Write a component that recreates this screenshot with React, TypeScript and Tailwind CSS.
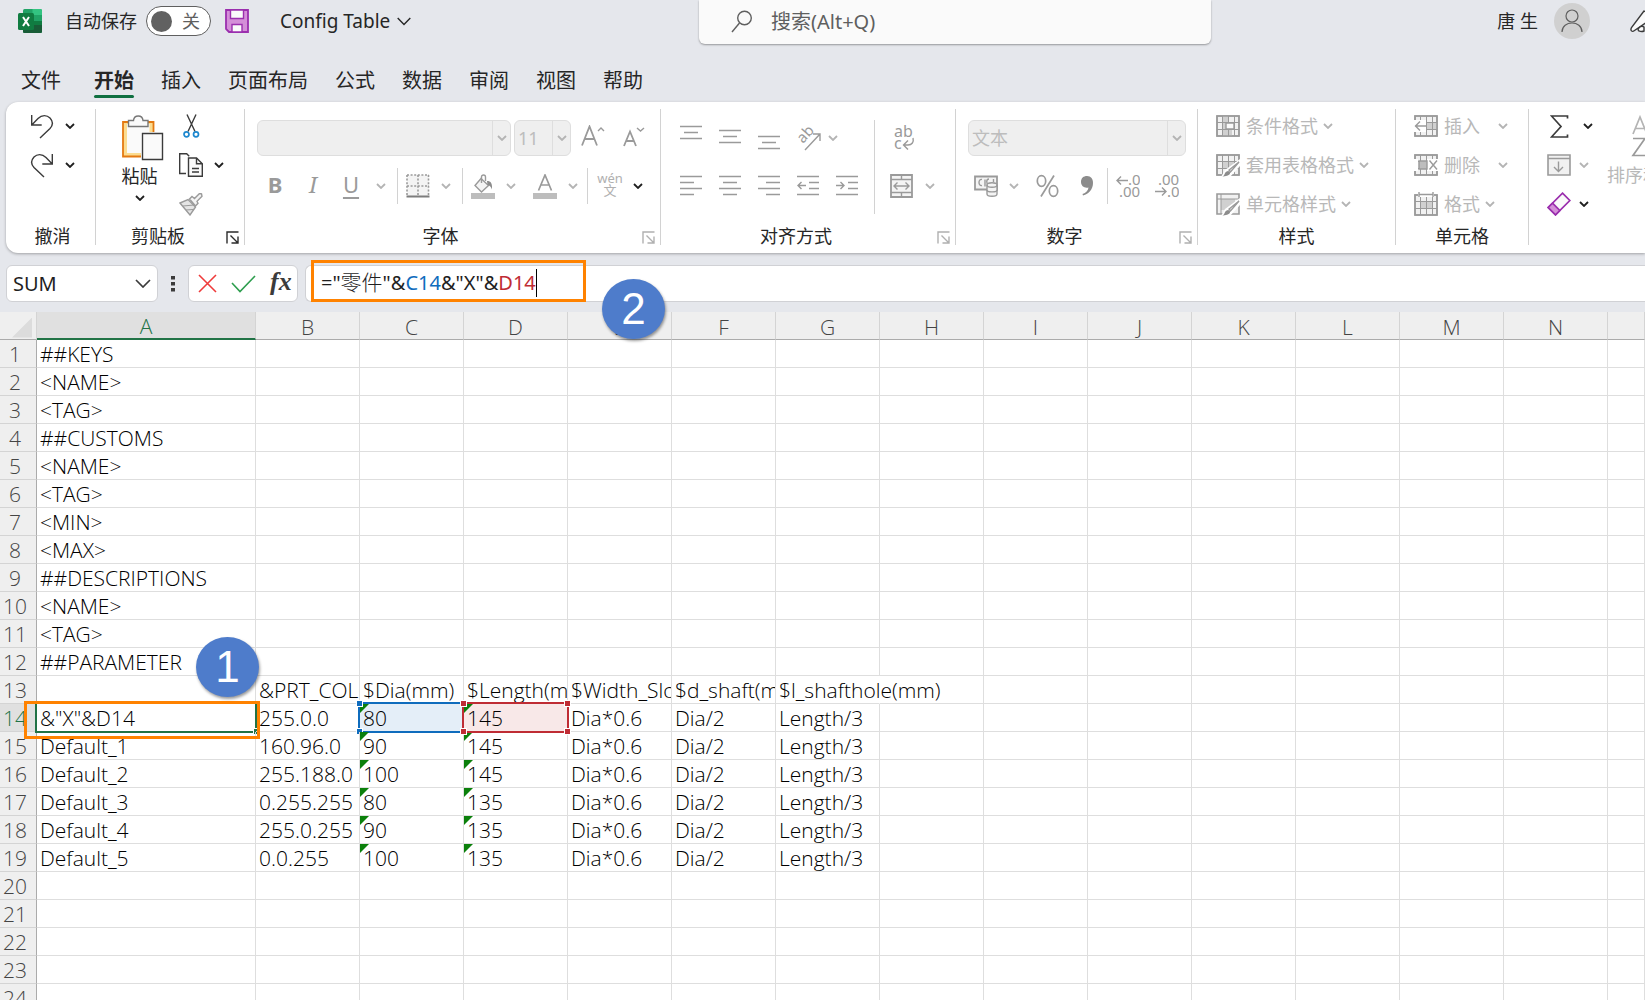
import type { ReactNode } from 'react';
import clsx from 'clsx';

const UI_FONT = "font-['Noto_Sans','Noto_Sans_CJK_SC',sans-serif]";
const CELL_FONT = "font-['Open_Sans','Noto_Sans_CJK_SC',sans-serif]";

/* ---------- 图标 ---------- */

interface IconProps {
  w: number;
  h: number;
  className?: string;
  children: ReactNode;
}

function Icon({ w, h, className = 'text-[#9a9a9a]', children }: IconProps) {
  return (
    <svg
      width={w}
      height={h}
      viewBox={`0 0 ${w} ${h}`}
      className={clsx('shrink-0', className)}
      fill="none"
      stroke="currentColor"
      strokeWidth={1.4}
      aria-hidden="true"
    >
      {children}
    </svg>
  );
}

function Chevron({ dark = false }: { dark?: boolean }) {
  return (
    <Icon w={10} h={6} className={dark ? 'text-[#1f1f1f]' : 'text-[#b4b4b4]'}>
      <path d="M1 1l4 4 4-4" strokeWidth={1.8} />
    </Icon>
  );
}

function ExcelLogo() {
  return (
    <Icon w={24} h={24}>
      <g stroke="none">
        <rect x="5" y="0" width="19" height="24" rx="1.5" fill="#21a366" />
        <path d="M14.500 0H22.500a1.500 1.500 0 0 1 1.500 1.500V6h-9.500z" fill="#33c481" />
        <path d="M5 6h9.500v6H5z" fill="#107c41" />
        <path d="M5 12h19v6H5z" fill="#107c41" />
        <path d="M5 16h19v6.500a1.500 1.500 0 0 1-1.500 1.500h-16A1.500 1.500 0 0 1 5 22.500z" fill="#185c37" />
        <rect x="0" y="4" width="16" height="17" rx="1.500" fill="#107c41" />
      </g>
      <path d="M5 8l6 9M11 8l-6 9" stroke="#fff" strokeWidth={2} />
    </Icon>
  );
}

function SaveIcon() {
  return (
    <Icon w={24} h={24} className="text-[#9b2fae]">
      <path d="M1 1h22v22H4l-3-3z" fill="#d48fd8" strokeWidth={1.8} />
      <path d="M5.500 1h13v8.500h-13z" fill="#fafafa" />
      <path d="M7 23v-7.500h10V23z" fill="#fafafa" />
    </Icon>
  );
}

function UndoIcon({ flip = false }: { flip?: boolean }) {
  return (
    <Icon w={24} h={25} className={clsx('text-[#3b3b3b]', flip && '-scale-x-100')}>
      <path d="M1.700 1v10h10M2 10.700L8 4.500C12 .5 17 1 20 4c3 3.300 3 7.300 0 10.500L10 24" />
    </Icon>
  );
}

function PasteIcon() {
  return (
    <Icon w={42} h={46}>
      <path d="M1 7h30.500v34.500H1z" fill="#fbdc90" stroke="#e47911" strokeWidth={1.8} />
      <path d="M5 9h22.500v29H5z" fill="#fafafa" stroke="none" />
      <path d="M6.500 11.500v-6h5c.5-6 9-6 9.500 0h5v6z" fill="#fafafa" stroke="#777" />
      <path d="M19 17h23v29H19z" fill="#fff" stroke="none" />
      <path d="M20.500 18.500h20v26h-20z" fill="#fafafa" stroke="#3b3b3b" />
    </Icon>
  );
}

function CutIcon() {
  return (
    <Icon w={17} h={24} className="text-[#3b3b3b]">
      <path d="M4 .5l8 17M13 .5l-8 17" />
      <circle cx="3.500" cy="20.300" r="2.500" stroke="#1e88cf" strokeWidth={1.700} />
      <circle cx="13" cy="20.300" r="2.500" stroke="#1e88cf" strokeWidth={1.700} />
    </Icon>
  );
}

function CopyIcon() {
  return (
    <Icon w={24} h={24} className="text-[#3b3b3b]">
      <path d="M7 20.500H.7V.7h7l2.500 2.500" />
      <path d="M9.500 5h8l5.800 5.800v12.500H9.500z" fill="#fafafa" />
      <path d="M17.500 5v5.800h5.800M13 15.500h7M13 19h7" />
    </Icon>
  );
}

function PainterIcon() {
  return (
    <Icon w={24} h={23}>
      <path d="M1 10l8-3.500 7.500 7.500-5.500 8z" fill="#e4e4e4" />
      <path d="M10.500 6l2.500-2.500 2.500 2 5-5 2 .3.500 2.500-5 5 1 2-2.500 2.700z" fill="#f4f4f4" />
      <path d="M4 13l11-1M7 17l7-.500" strokeWidth={1} />
    </Icon>
  );
}

function LauncherIcon({ dark = false }: { dark?: boolean }) {
  return (
    <Icon w={13} h={13} className={dark ? 'text-[#2b2b2b]' : 'text-[#b0b0b0]'}>
      <path d="M1 12.500V1h11.500M4.500 4.500l7 7M12 5.500V12H5.500" />
    </Icon>
  );
}

function BordersIcon() {
  return (
    <Icon w={24} h={24}>
      <path d="M1 1h22v21H1z" fill="#f4f4f4" stroke="none" />
      <path d="M1 1h22M1 12h22M1 1v20M12 1v20M22.500 1v20" strokeDasharray="2 1.600" strokeWidth={1.600} />
      <path d="M.5 22.500h23" strokeWidth={2} stroke="#7d7d7d" />
    </Icon>
  );
}

function FillColorIcon() {
  return (
    <Icon w={24} h={25}>
      <path d="M10 4.500l7.500 7-7 6.500L4 11.500z" fill="#f4f4f4" />
      <path d="M10.500 9V3a2 2 0 0 1 4 0v4" />
      <path d="M16 7c4 0 5.500 2.500 5 8.500-1-2.500-2-4-4.500-4.500z" fill="#8c8c8c" stroke="none" />
      <path d="M0 19h24v6H0z" fill="#bdbdbd" stroke="none" />
    </Icon>
  );
}

function FontColorIcon() {
  return (
    <Icon w={24} h={25}>
      <path d="M5.500 16.500L12 1l6.500 15.500M8 11h8" strokeWidth={1.700} />
      <path d="M0 19h24v6H0z" fill="#bdbdbd" stroke="none" />
    </Icon>
  );
}

function GrowFontIcon({ shrink = false }: { shrink?: boolean }) {
  return (
    <Icon w={24} h={22}>
      {shrink ? (
        <>
          <path d="M3 21L9 6.500 15 21M5 16h8" strokeWidth={1.800} />
          <path d="M16 3l3.500 3L23 3" />
        </>
      ) : (
        <>
          <path d="M1 20.500L8.500 1.500 16 20.500M4 14h9" strokeWidth={1.800} />
          <path d="M17 6l3-3 3 3" />
        </>
      )}
    </Icon>
  );
}

/* 三条或四条横线组成的对齐图标 */
function LinesIcon({ lines }: { lines: [number, number, number][] }) {
  return (
    <Icon w={22} h={26}>
      {lines.map(([y, x1, x2]) => (
        <path key={y} d={`M${x1} ${y}.5H${x2}`} strokeWidth={1.600} />
      ))}
    </Icon>
  );
}

function IndentIcon({ out = false }: { out?: boolean }) {
  return (
    <Icon w={22} h={26}>
      <path d="M0 3.500h22M12 9.500h10M12 15.500h10M0 21.500h22" strokeWidth={1.600} />
      <path d={out ? 'M9 12.500H1M4.500 9L1 12.500 4.500 16' : 'M0 12.500h8M4.500 9L8 12.500 4.500 16'} />
    </Icon>
  );
}

function OrientationIcon() {
  return (
    <Icon w={25} h={25}>
      <text x="6" y="18" transform="rotate(-48 6 18)" fontSize="15" fill="currentColor" stroke="none">
        ab
      </text>
      <path d="M8 24L23 8M16 8h7v7" />
    </Icon>
  );
}

function WrapIcon() {
  return (
    <Icon w={22} h={26}>
      <text x="1" y="12" fontSize="16" fill="currentColor" stroke="none">ab</text>
      <text x="1" y="24" fontSize="16" fill="currentColor" stroke="none">c</text>
      <path d="M20 13c1 4-1 7-5 7h-4M15 15.500L10.500 20l4.500 4.500" />
    </Icon>
  );
}

function MergeIcon() {
  return (
    <Icon w={23} h={24}>
      <path d="M1 1h21v22H1z" fill="#f4f4f4" strokeWidth={1.800} />
      <path d="M1 5.500h21M1 18.500h21M11.500 1v4.500M11.500 18.500V23M4 12h15M7.500 8.500L4 12l3.500 3.500M15.500 8.500L19 12l-3.500 3.500" />
    </Icon>
  );
}

function AccountingIcon() {
  return (
    <Icon w={24} h={22}>
      <path d="M1 1.500h22v13H1z" fill="#f4f4f4" strokeWidth={1.800} />
      <path d="M8 4.500c-4-1-4 7 0 6M11 4.500v7M15 4c-3 0-3 5 0 7M19.500 4v3" />
      <path d="M13 10c0-3 10-3 10 0v9c0 3-10 3-10 0z" fill="#f4f4f4" />
      <path d="M13 10c0 3 10 3 10 0M13 15c0 2.500 10 2.500 10 0" />
    </Icon>
  );
}

function PercentIcon() {
  return (
    <Icon w={23} h={24}>
      <ellipse cx="5.500" cy="7" rx="4.200" ry="5.300" strokeWidth={1.700} />
      <ellipse cx="17.500" cy="17" rx="4.200" ry="5.300" strokeWidth={1.700} />
      <path d="M18 1.500L5 22.500" strokeWidth={1.700} />
    </Icon>
  );
}

function CommaIcon() {
  return (
    <Icon w={12} h={20}>
      <path d="M6 0c4 0 6 3 6 7 0 6-4 11-10 12.500l-.5-1.500c3.500-1 5.500-3.500 6-6.500-4 1-7.500-1.500-7.500-5.500S2.500 0 6 0z" fill="#8c8c8c" stroke="none" />
    </Icon>
  );
}

function DecimalIcon({ decrease = false }: { decrease?: boolean }) {
  return (
    <Icon w={24} h={26}>
      <g fill="currentColor" stroke="none" fontSize="15">
        <text x={decrease ? 3 : 12} y="12">{decrease ? '.00' : '.0'}</text>
        <text x={decrease ? 12 : 3} y="24">{decrease ? '.0' : '.00'}</text>
      </g>
      <path d={decrease ? 'M0 18.500h11M7 14.500l4 4-4 4' : 'M12 7.500H1M5 3.500l-4 4 4 4'} />
    </Icon>
  );
}

function TableBase({ shade }: { shade?: string }) {
  return (
    <>
      <path d="M1 1h22v20H1z" fill="#f1f1f1" />
      {shade && <path d={shade} fill="#d0d0d0" stroke="none" />}
      <path d="M1 7.500h22M1 14.500h22M6.500 1v20M12.500 1v20M18.500 1v20" strokeWidth={1} />
      <path d="M1 1h22v20H1z" strokeWidth={1.600} />
    </>
  );
}

function BrushOverlay() {
  return (
    <>
      <path d="M24 5L9 16l-4 7h9l10-11z" fill="#fff" stroke="none" />
      <path d="M23 8L13 16l1.500 2z" fill="#e8e8e8" />
      <path d="M6 22.500c3 0 2-5 6-5.500 4 1 2.500 5.500-6 5.500z" fill="#8c8c8c" stroke="none" />
    </>
  );
}

const CondFormatIcon = () => (
  <Icon w={24} h={22}>
    <TableBase shade="M7 1h6v6H7zM7 8h3v6H7zM7 15h9v6H7z" />
    <path d="M10 8h8v6h-8z" fill="#fafafa" />
  </Icon>
);

const TableFormatIcon = () => (
  <Icon w={24} h={23}>
    <TableBase shade="M7 8h11v6H7z" />
    <BrushOverlay />
  </Icon>
);

const CellStyleIcon = () => (
  <Icon w={24} h={23}>
    <path d="M1 1h22v20H1z" fill="#f1f1f1" strokeWidth={1.600} />
    <path d="M5 6h14v11H5z" fill="#d0d0d0" stroke="none" />
    <path d="M1 6h22M5 1v20" strokeWidth={1} />
    <BrushOverlay />
  </Icon>
);

const InsertCellIcon = () => (
  <Icon w={24} h={22}>
    <TableBase shade="M13 8h10v6H13z" />
    <path d="M0 5h12v12H0z" fill="#fff" stroke="none" />
    <path d="M12 11H1M6 6.500L1.500 11 6 15.500" />
  </Icon>
);

const DeleteCellIcon = () => (
  <Icon w={24} h={22}>
    <TableBase />
    <path d="M0 5h4v12H0zM13 5h11v12H13z" fill="#fff" stroke="none" />
    <path d="M5 7h8v8H5z" fill="#bdbdbd" />
    <path d="M15.500 6.500l7.500 9M23 6.500l-7.500 9" />
  </Icon>
);

const FormatCellIcon = () => (
  <Icon w={24} h={24}>
    <g transform="translate(0 2)">
      <TableBase shade="M6 8h12v6H6z" />
    </g>
    <path d="M4 0h16v5H4z" fill="#fff" stroke="none" />
    <path d="M5 0v5M19 0v5M5 2.500h14" />
  </Icon>
);

function SigmaIcon() {
  return (
    <Icon w={19} h={23} className="text-[#3b3b3b]">
      <path d="M17.500 3.500V1H1.500l9.500 10.500L1.500 22h16v-2.500" strokeWidth={1.700} />
    </Icon>
  );
}

function FillDownIcon() {
  return (
    <Icon w={24} h={22}>
      <path d="M1 1h22v20H1z" fill="#f1f1f1" strokeWidth={1.600} />
      <path d="M1 4.500h22M11.500 7.500v10M7 13l4.500 4.500L16 13" />
    </Icon>
  );
}

function EraserIcon() {
  return (
    <Icon w={24} h={24} className="text-[#9b2fae]">
      <path d="M15.500 1.200l7.300 7.300L8.500 22.800 1.200 15.500z" fill="#fafafa" strokeWidth={1.700} />
      <path d="M5.500 11.200l7.300 7.300-4.300 4.300-7.300-7.300z" fill="#d48fd8" strokeWidth={1.700} />
    </Icon>
  );
}

function SortIcon() {
  return (
    <Icon w={42} h={42}>
      <path d="M2 19L9 2l7 17M4.500 13.500h9" strokeWidth={1.700} stroke="#b4b4b4" />
      <path d="M2 23.500h12L2 40.500h13" strokeWidth={1.700} />
      <path d="M22 3h19L33 14v14l-4-3V14z" />
    </Icon>
  );
}

/* ---------- 功能区 ---------- */

interface ToolProps {
  label: string;
  className?: string;
  children: ReactNode;
}

function Tool({ label, className, children }: ToolProps) {
  return (
    <button type="button" title={label} aria-label={label} className={clsx('flex h-9 shrink-0 items-center justify-center', className)}>
      {children}
    </button>
  );
}

function Sep({ className }: { className?: string }) {
  return <span className={clsx('h-9 w-px shrink-0 bg-[#d2d2d2]', className)} />;
}

interface GroupProps {
  title: string;
  width: string;
  launcher?: 'dark' | 'light';
  children: ReactNode;
}

function Group({ title, width, launcher, children }: GroupProps) {
  return (
    <section className={clsx('flex h-[136px] shrink-0 flex-col border-r border-[#d2d2d2]', width)}>
      <div className="min-h-0 flex-1">{children}</div>
      <div className="flex h-[18px] items-start">
        <h2 className="flex-1 text-center text-lg leading-[18px] text-[#262626]">{title}</h2>
        {launcher && (
          <button type="button" aria-label={`${title}设置`} className="flex w-6 justify-center pt-1">
            <LauncherIcon dark={launcher === 'dark'} />
          </button>
        )}
      </div>
    </section>
  );
}

interface ComboProps {
  label: string;
  value: string;
  width: string;
}

function Combo({ label, value, width }: ComboProps) {
  return (
    <div className={clsx('flex h-9 shrink-0 overflow-hidden rounded-md border border-[#dedede] bg-[#efefef]', width)}>
      <select
        aria-label={label}
        disabled
        defaultValue={value}
        className="min-w-0 flex-1 appearance-none bg-transparent pl-[3px] text-lg text-[#bdbdbd] opacity-100"
      >
        <option value={value}>{value}</option>
      </select>
      <span className="flex w-[18px] items-center justify-center border-l border-[#dedede]">
        <Chevron />
      </span>
    </div>
  );
}

interface ListToolProps {
  icon: ReactNode;
  text: string;
  wide?: boolean;
}

function ListTool({ icon, text, wide = false }: ListToolProps) {
  return (
    <button type="button" className="flex h-[34px] items-center whitespace-nowrap text-lg text-[#b8b8b8]">
      {icon}
      <span className={clsx('ml-1.5', wide && 'w-[49px] text-left')}>{text}</span>
      <span className="ml-[5px]">
        <Chevron />
      </span>
    </button>
  );
}

function Ribbon() {
  return (
    <div className="ml-1.5 flex h-[151px] shrink-0 overflow-hidden rounded-l-xl bg-white pt-[7px] shadow-[0_1px_3px_rgba(0,0,0,0.3)]">
      <Group title="撤消" width="w-[90px] pl-1">
        <div className="flex flex-col gap-[5px] pl-5">
          {[false, true].map((flip) => (
            <div key={String(flip)} className="flex h-[34px] items-center gap-[11px]">
              <button type="button" aria-label={flip ? '恢复' : '撤消'}>
                <UndoIcon flip={flip} />
              </button>
              <Chevron dark />
            </div>
          ))}
        </div>
      </Group>

      <Group title="剪贴板" width="w-[149px]" launcher="dark">
        <div className="flex">
          <button type="button" className="flex w-[83px] flex-col items-center pt-1.5 pl-1 text-lg leading-6 text-[#262626]">
            <span className="pl-1.5"><PasteIcon /></span>
            <span className="mt-[3px]">粘贴</span>
            <span className="flex h-5 items-center">
              <Chevron dark />
            </span>
          </button>
          <div className="flex flex-col gap-[5px]">
            <button type="button" aria-label="剪切" className="flex h-[34px] w-6 items-center justify-center">
              <CutIcon />
            </button>
            <button type="button" aria-label="复制" className="flex h-[34px] items-center gap-[11px]">
              <CopyIcon />
              <Chevron dark />
            </button>
            <button type="button" aria-label="格式刷" className="flex h-[34px] w-6 items-center">
              <PainterIcon />
            </button>
          </div>
        </div>
      </Group>

      <Group title="字体" width="w-[416px]" launcher="light">
        <div className="flex flex-col gap-3 pt-[11px] pl-3">
          <div className="flex items-center">
            <Combo label="字体" value="" width="w-[254px]" />
            <Combo label="字号" value="11" width="w-[57px] ml-[3px]" />
            <Tool label="增大字号" className="ml-1.5 w-8 pb-1"><GrowFontIcon /></Tool>
            <Tool label="减小字号" className="ml-2 w-8 pb-1"><GrowFontIcon shrink /></Tool>
          </div>
          <div className="flex items-center text-[22px] text-[#9a9a9a]">
            <Tool label="加粗" className="w-9 pb-1 font-bold">B</Tool>
            <Tool label="倾斜" className="w-10 pb-1 font-['Noto_Serif','DejaVu_Serif','Liberation_Serif',serif] italic">I</Tool>
            <Tool label="下划线" className="w-9 pb-1 underline underline-offset-4">U</Tool>
            <Tool label="下划线样式" className="w-6"><Chevron /></Tool>
            <Sep className="ml-1" />
            <Tool label="边框" className="ml-1 w-8"><BordersIcon /></Tool>
            <Tool label="边框样式" className="w-6"><Chevron /></Tool>
            <Sep className="ml-1" />
            <Tool label="填充颜色" className="ml-1 w-8"><FillColorIcon /></Tool>
            <Tool label="更多填充颜色" className="w-6"><Chevron /></Tool>
            <Tool label="字体颜色" className="ml-1 w-9"><FontColorIcon /></Tool>
            <Tool label="更多字体颜色" className="w-5"><Chevron /></Tool>
            <Sep className="ml-1" />
            <Tool label="拼音指南" className="w-11 flex-col pb-1 text-[13px] leading-3 text-[#b0b0b0]">
              <span>wén</span>
              <span>文</span>
            </Tool>
            <Tool label="更多拼音选项" className="w-3"><Chevron dark /></Tool>
          </div>
        </div>
      </Group>

      <Group title="对齐方式" width="w-[295px]" launcher="light">
        <div className="flex pt-[11px] pl-[19px]">
          <div className="flex flex-col gap-3">
            <div className="flex h-9 items-center gap-[17px]">
              <LinesIcon lines={[[1, 0, 22], [7, 4, 18], [13, 0, 22]]} />
              <LinesIcon lines={[[5, 0, 22], [11, 4, 18], [17, 0, 22]]} />
              <LinesIcon lines={[[11, 0, 22], [17, 4, 18], [23, 0, 22]]} />
              <div className="flex items-center gap-1.5">
                <OrientationIcon />
                <Chevron />
              </div>
            </div>
            <div className="flex h-9 items-center gap-[17px]">
              <LinesIcon lines={[[3, 0, 22], [9, 0, 14], [15, 0, 22], [21, 0, 14]]} />
              <LinesIcon lines={[[3, 0, 22], [9, 4, 18], [15, 0, 22], [21, 4, 18]]} />
              <LinesIcon lines={[[3, 0, 22], [9, 8, 22], [15, 0, 22], [21, 8, 22]]} />
              <IndentIcon out />
              <IndentIcon />
            </div>
          </div>
          <span className="ml-4 h-[94px] w-px bg-[#d2d2d2]" />
          <div className="ml-[15px] flex flex-col gap-3">
            <Tool label="自动换行" className="w-7"><WrapIcon /></Tool>
            <Tool label="合并后居中" className="gap-3">
              <MergeIcon />
              <Chevron />
            </Tool>
          </div>
        </div>
      </Group>

      <Group title="数字" width="w-[242px]" launcher="light">
        <div className="flex flex-col gap-3 pt-[11px] pl-3">
          <Combo label="数字格式" value="文本" width="w-[218px]" />
          <div className="flex items-center pl-1.5">
            <Tool label="会计数字格式" className="gap-[11px]">
              <AccountingIcon />
              <Chevron />
            </Tool>
            <Tool label="百分比样式" className="ml-[17px]"><PercentIcon /></Tool>
            <Tool label="千位分隔样式" className="ml-[22px]"><CommaIcon /></Tool>
            <Sep className="ml-3.5" />
            <Tool label="增加小数位数" className="ml-2"><DecimalIcon /></Tool>
            <Tool label="减少小数位数" className="ml-[15px]"><DecimalIcon decrease /></Tool>
          </div>
        </div>
      </Group>

      <Group title="样式" width="w-[198px]">
        <div className="flex flex-col gap-[5px] pl-[18px]">
          <ListTool icon={<CondFormatIcon />} text="条件格式" />
          <ListTool icon={<TableFormatIcon />} text="套用表格格式" />
          <ListTool icon={<CellStyleIcon />} text="单元格样式" />
        </div>
      </Group>

      <Group title="单元格" width="w-[133px]">
        <div className="flex flex-col gap-[5px] pl-[18px]">
          <ListTool icon={<InsertCellIcon />} text="插入" wide />
          <ListTool icon={<DeleteCellIcon />} text="删除" wide />
          <ListTool icon={<FormatCellIcon />} text="格式" />
        </div>
      </Group>

      <div className="flex min-w-0 flex-1 overflow-hidden pl-[18px]">
        <div className="flex shrink-0 flex-col gap-[5px]">
          <button type="button" aria-label="自动求和" className="flex h-[34px] items-center gap-3.5 pl-[3px]">
            <SigmaIcon />
            <Chevron dark />
          </button>
          <button type="button" aria-label="填充" className="flex h-[34px] items-center gap-2">
            <FillDownIcon />
            <Chevron />
          </button>
          <button type="button" aria-label="清除" className="flex h-[34px] items-center gap-2">
            <EraserIcon />
            <Chevron dark />
          </button>
        </div>
        <button type="button" className="ml-3.5 flex h-20 shrink-0 flex-col items-center pt-1.5 text-lg leading-6 text-[#b8b8b8]">
          <SortIcon />
          <span className="mt-1.5">排序和筛选</span>
        </button>
      </div>
    </div>
  );
}

/* ---------- 标题栏与选项卡 ---------- */

function TitleBar() {
  return (
    <header className="flex h-[58px] shrink-0 items-start text-lg text-[#262626]">
      <div className="flex h-[42px] w-[699px] shrink-0 items-center pl-[18px]">
        <ExcelLogo />
        <span className="ml-[23px]">自动保存</span>
        <button
          type="button"
          role="switch"
          aria-checked="false"
          aria-label="自动保存"
          className="ml-[9px] flex h-[30px] w-[65px] items-center justify-between rounded-full border border-[#5f5f5f] bg-white pr-2.5 pl-1 text-[#5f5f5f]"
        >
          <span className="size-[21px] rounded-full bg-[#616161]" />
          <span>关</span>
        </button>
        <button type="button" aria-label="保存" className="ml-3.5"><SaveIcon /></button>
        <button type="button" className="ml-[31px] flex items-center gap-[7px] pt-0.5 text-[19px]">
          Config Table
          <Icon w={14} h={9} className="text-[#262626]">
            <path d="M.7 1L7 7.500 13.300 1" />
          </Icon>
        </button>
      </div>
      <label className="flex h-[44px] min-w-0 flex-1 items-center rounded-b-md bg-[#fafafa] pb-0.5 pl-8 shadow-[0_1px_2px_rgba(0,0,0,0.35)]">
        <Icon w={22} h={23} className="text-[#5f5f5f]">
          <circle cx="13.500" cy="8" r="6.800" />
          <path d="M8.500 13L1 22" />
        </Icon>
        <input
          type="search"
          aria-label="搜索"
          placeholder="搜索(Alt+Q)"
          className="ml-[18px] h-10 min-w-0 flex-1 bg-transparent text-xl outline-none placeholder:text-[#5f5f5f]"
        />
      </label>
      <div className="flex h-[42px] w-[434px] shrink-0 items-center justify-end overflow-hidden">
        <span>唐 生</span>
        <span className="ml-4 flex size-9 items-center justify-center rounded-full bg-[#d0d0d0]">
          <Icon w={22} h={24} className="text-[#5f5f5f]">
            <circle cx="11" cy="7" r="6" strokeWidth={1.200} />
            <path d="M1 23c0-12 20-12 20 0" strokeWidth={1.200} />
          </Icon>
        </span>
        <span className="ml-10 flex w-[15px] overflow-hidden">
          <Icon w={30} h={24} className="text-[#3b3b3b]">
            <path d="M14 2L1.500 18.500C0 21.500 2 23.500 4.500 21.500L17 13l7-7z" fill="#fafafa" />
            <path d="M8 20.500c1-3 4-4 6-2.500v4c-2 1-6 .5-6-1.500z" fill="#fafafa" />
          </Icon>
        </span>
      </div>
    </header>
  );
}

const TABS = ['文件', '开始', '插入', '页面布局', '公式', '数据', '审阅', '视图', '帮助'];

function Tabs() {
  return (
    <nav className="flex h-11 shrink-0 gap-[27px] pl-[21px] text-xl text-[#262626]">
      {TABS.map((tab) => (
        <button
          key={tab}
          type="button"
          className={clsx(
            'flex h-10 flex-col justify-end leading-7',
            tab === '文件' && 'mr-1.5',
            tab === '开始' && 'font-bold',
          )}
        >
          {tab}
          <span className={clsx('h-[3px] w-full rounded-full', tab === '开始' && 'bg-[#107041]')} />
        </button>
      ))}
    </nav>
  );
}

/* ---------- 编辑栏 ---------- */

function FormulaBar() {
  return (
    <div className="flex h-[59px] shrink-0 items-start pt-3 pl-1.5">
      <div className="flex h-[37px] w-[152px] shrink-0 items-center rounded-md border border-[#d0d1d5] bg-white pr-1.5">
        <input aria-label="名称框" defaultValue="SUM" className="min-w-0 flex-1 bg-transparent pl-1.5 text-xl text-[#1f1f1f] outline-none" />
        <button type="button" aria-label="名称列表">
          <Icon w={16} h={9} className="text-[#3b3b3b]">
            <path d="M1 1l7 7 7-7" strokeWidth={1.700} />
          </Icon>
        </button>
      </div>
      <span className="flex h-[37px] w-[30px] shrink-0 items-center justify-center">
        <Icon w={4} h={16} className="text-[#3b3b3b]">
          <path d="M0 0h4v3.500H0zM0 6h4v3.500H0zM0 12h4v3.500H0z" fill="currentColor" stroke="none" />
        </Icon>
      </span>
      <div className="flex h-[37px] w-[110px] shrink-0 items-center rounded-md border border-[#d0d1d5] bg-white pl-[9px]">
        <button type="button" aria-label="取消">
          <Icon w={19} h={19} className="text-[#ef3b3b]">
            <path d="M1 1l17 17M18 1L1 18" strokeWidth={1.600} />
          </Icon>
        </button>
        <button type="button" aria-label="输入" className="ml-3.5">
          <Icon w={25} h={18} className="text-[#2e9e4f]">
            <path d="M1 8l8 8.500L24 1" strokeWidth={1.600} />
          </Icon>
        </button>
        <button type="button" aria-label="插入函数" className="ml-3.5 pb-1 font-['Liberation_Serif',serif] text-[26px] leading-8 font-bold text-[#3b3b3b] italic">
          fx
        </button>
      </div>
      <div className="relative ml-[7px] h-[37px] min-w-0 flex-1 rounded-l-md border border-r-0 border-[#d0d1d5] bg-white">
        <div
          role="textbox"
          aria-label="编辑栏"
          contentEditable
          suppressContentEditableWarning
          className="flex h-[35px] items-center pb-0.5 pl-[15px] text-xl whitespace-nowrap text-[#1f1f1f] outline-none"
        >
          <span>="</span>
          <span className="text-[21px] font-light">零件</span>
          <span>"&amp;</span>
          <span className="text-[#0f6cbd]">C14</span>
          <span>&amp;"X"&amp;</span>
          <span className="text-[#bf2c34]">D14</span>
          <span className="h-7 w-px bg-black" />
        </div>
        <div className="pointer-events-none absolute -top-1.5 left-[5px] h-[42px] w-[275px] border-3 border-[#ff8200]" />
        <StepBadge step={2} className="top-[13px] left-[296px]" />
      </div>
    </div>
  );
}

function StepBadge({ step, className }: { step: number; className: string }) {
  return (
    <div
      className={clsx(
        "absolute z-10 flex h-[60px] w-[63px] items-center justify-center rounded-[50%] bg-[#4e7ccb] font-['Liberation_Sans',sans-serif] text-[44px] leading-none text-white shadow-[1px_2px_3px_rgba(0,0,0,0.4)]",
        className,
      )}
    >
      {step}
    </div>
  );
}

/* ---------- 表格 ---------- */

const COLUMNS = ['A', 'B', 'C', 'D', 'E', 'F', 'G', 'H', 'I', 'J', 'K', 'L', 'M', 'N', ''];

const ROWS: string[][] = [
  ['##KEYS'],
  ['<NAME>'],
  ['<TAG>'],
  ['##CUSTOMS'],
  ['<NAME>'],
  ['<TAG>'],
  ['<MIN>'],
  ['<MAX>'],
  ['##DESCRIPTIONS'],
  ['<NAME>'],
  ['<TAG>'],
  ['##PARAMETER'],
  ['', '&PRT_COLOR', '$Dia(mm)', '$Length(mm)', '$Width_Slot(mm)', '$d_shaft(mm)', '$l_shafthole(mm)'],
  ['&"X"&D14', '255.0.0', '80', '145', 'Dia*0.6', 'Dia/2', 'Length/3'],
  ['Default_1', '160.96.0', '90', '145', 'Dia*0.6', 'Dia/2', 'Length/3'],
  ['Default_2', '255.188.0', '100', '145', 'Dia*0.6', 'Dia/2', 'Length/3'],
  ['Default_3', '0.255.255', '80', '135', 'Dia*0.6', 'Dia/2', 'Length/3'],
  ['Default_4', '255.0.255', '90', '135', 'Dia*0.6', 'Dia/2', 'Length/3'],
  ['Default_5', '0.0.255', '100', '135', 'Dia*0.6', 'Dia/2', 'Length/3'],
  [],
  [],
  [],
  [],
  [],
];

/* 公式引用单元格的彩色边框和四个角点 */
function RefFrame({ color }: { color: 'blue' | 'red' }) {
  const dot = clsx('absolute size-[7px] border border-white', color === 'blue' ? 'bg-[#0f6cbd]' : 'bg-[#bf2c34]');
  return (
    <div
      className={clsx(
        'pointer-events-none absolute -top-0.5 -right-0.5 -bottom-0.5 -left-0.5 border-2',
        color === 'blue' ? 'border-[#0f6cbd]' : 'z-[1] border-[#bf2c34]',
      )}
    >
      <span className={clsx(dot, '-top-1 -left-1')} />
      <span className={clsx(dot, '-top-1 -right-1')} />
      <span className={clsx(dot, '-bottom-1 -left-1')} />
      <span className={clsx(dot, '-right-1 -bottom-1')} />
    </div>
  );
}

function Cell({ row, col, text }: { row: number; col: string; text: string }) {
  const isTextNumber = row >= 14 && text !== '' && (col === 'C' || col === 'D');
  const spills = row === 13 && col === 'G';
  return (
    <td
      className={clsx(
        'relative h-7 border-r border-b border-[#dedede] p-0',
        spills && 'border-r-white',
        row === 14 && col === 'C' && 'bg-[#e4eef8]',
        row === 14 && col === 'D' && 'bg-[#f8e8e8]',
      )}
    >
      <div className={clsx('h-[27px] pl-[3px] leading-[28px] whitespace-nowrap', !spills && 'overflow-x-clip')}>{text}</div>
      {isTextNumber && (
        <span className="absolute top-0 left-0 size-[9px] bg-[#0b800b] [clip-path:polygon(0_0,100%_0,0_100%)]" />
      )}
      {row === 14 && col === 'A' && (
        <>
          <div className="absolute -top-0.5 -right-0.5 -bottom-0.5 -left-0.5 border-2 border-[#217346]" />
          <span className="absolute -right-1 -bottom-[3px] size-[6px] border-t border-l border-white bg-[#217346]" />
          <div className="absolute -top-[3px] -right-[5px] -bottom-2 -left-[13px] z-10 border-3 border-[#ff8200]" />
        </>
      )}
      {row === 14 && col === 'C' && <RefFrame color="blue" />}
      {row === 14 && col === 'D' && <RefFrame color="red" />}
      {row === 12 && col === 'A' && <StepBadge step={1} className="-top-[11px] left-[159px]" />}
    </td>
  );
}

function Sheet() {
  return (
    <main className={clsx('min-h-0 flex-1 overflow-hidden bg-white text-[21px]', CELL_FONT)}>
      <table className="w-full table-fixed border-separate border-spacing-0 font-light text-black">
        <colgroup>
          <col className="w-[37px]" />
          {COLUMNS.map((name) => (
            <col key={name} className={clsx(name === 'A' && 'w-[219px]', name !== 'A' && name !== '' && 'w-[104px]')} />
          ))}
        </colgroup>
        <thead>
          <tr className="text-[#444]">
            <th className="h-7 border-r border-b border-r-[#d4d4d4] border-b-[#ababab] bg-[#efefef] p-0">
              <span className="mt-1 ml-3 block h-5 w-5 bg-[#dcdcdc] [clip-path:polygon(100%_0,100%_100%,0_100%)]" />
            </th>
            {COLUMNS.map((name) => (
              <th
                key={name}
                scope="col"
                className={clsx(
                  'h-7 border-r border-r-[#d4d4d4] p-0 font-light',
                  name === 'A' ? 'border-b-2 border-b-[#217346] bg-[#e0e0e0] text-[#217346]' : 'border-b border-b-[#ababab] bg-[#efefef]',
                )}
              >
                <div className="h-[26px] leading-[28px]">{name}</div>
              </th>
            ))}
          </tr>
        </thead>
        <tbody>
          {ROWS.map((cells, i) => {
            const row = i + 1;
            return (
              <tr key={row}>
                <th
                  scope="row"
                  className={clsx(
                    'h-7 border-r border-b border-r-[#ababab] border-b-[#d4d4d4] p-0 pr-1.5 font-light',
                    row === 14 ? 'bg-[#e0e0e0] text-[#217346]' : 'bg-[#efefef] text-[#444]',
                  )}
                >
                  <div className="h-[27px] leading-[28px]">{row}</div>
                </th>
                {COLUMNS.map((col, j) => (
                  <Cell key={col} row={row} col={col} text={cells[j] ?? ''} />
                ))}
              </tr>
            );
          })}
        </tbody>
      </table>
    </main>
  );
}

export default function App() {
  return (
    <div className={clsx('flex h-screen flex-col overflow-hidden bg-[#e5e7ec]', UI_FONT)}>
      <TitleBar />
      <Tabs />
      <Ribbon />
      <FormulaBar />
      <Sheet />
    </div>
  );
}
